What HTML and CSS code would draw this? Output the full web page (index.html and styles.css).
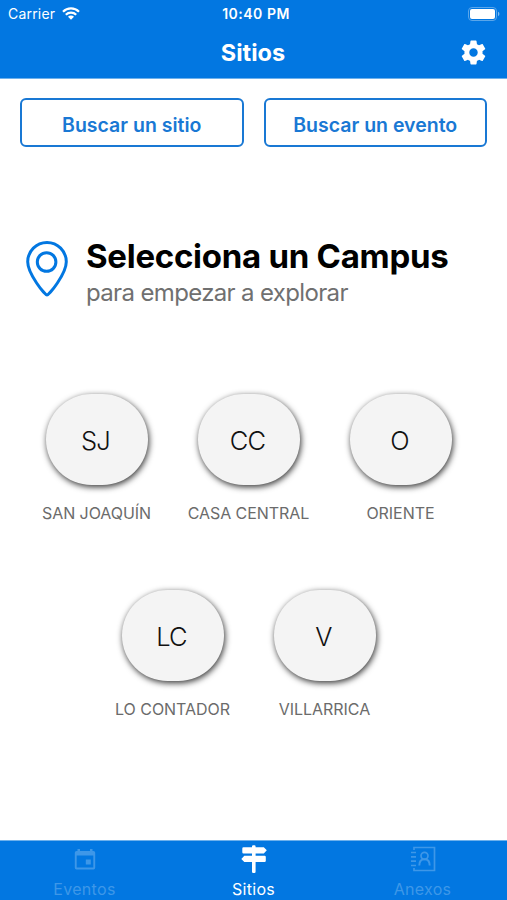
FILE: index.html
```
<!DOCTYPE html>
<html lang="es">
<head>
    <meta charset="UTF-8">
    <meta name="viewport" content="width=device-width, initial-scale=1.0">
    <title>Sitios</title>
    <link rel="stylesheet" href="styles.css">
</head>
<body>

<header class="header">
    <div class="status">
        <div class="carrier">
            <span>Carrier</span>
            <svg class="wifi" viewBox="0 0 18 13">
                <path d="M1 4.7a11.4 11.4 0 0 1 16 0M3.8 7.7a7.4 7.4 0 0 1 10.4 0" fill="none" stroke="#fff" stroke-width="2.2"/>
                <path d="M6 9.8a4.2 4.2 0 0 1 6 0L9 12.8z" fill="#fff"/>
            </svg>
        </div>
        <div class="time">10:40 PM</div>
        <svg class="battery" viewBox="0 0 32 14">
            <rect x=".5" y=".5" width="28" height="13" rx="3.5" fill="none" stroke="#5aa6ea"/>
            <rect x="2" y="2" width="25" height="10" rx="2" fill="#fff"/>
            <path d="M30 4.8a2.4 2.4 0 0 1 0 4.4z" fill="#80bbf0"/>
        </svg>
    </div>
    <div class="navbar">
        <h1 class="title">Sitios</h1>
        <svg class="gear" viewBox="0 0 24 24">
            <path fill="#fff" d="M19.43 12.98c.04-.32.07-.64.07-.98s-.03-.66-.07-.98l2.11-1.65c.19-.15.24-.42.12-.64l-2-3.46c-.12-.22-.39-.3-.61-.22l-2.49 1c-.52-.4-1.08-.73-1.69-.98l-.38-2.65C14.46 2.18 14.25 2 14 2h-4c-.25 0-.46.18-.49.42l-.38 2.65c-.61.25-1.17.59-1.69.98l-2.49-1c-.23-.09-.49 0-.61.22l-2 3.46c-.13.22-.07.49.12.64l2.11 1.65c-.04.32-.07.65-.07.98s.03.66.07.98l-2.11 1.65c-.19.15-.24.42-.12.64l2 3.46c.12.22.39.3.61.22l2.49-1c.52.4 1.08.73 1.69.98l.38 2.65c.03.24.24.42.49.42h4c.25 0 .46-.18.49-.42l.38-2.65c.61-.25 1.17-.59 1.69-.98l2.49 1c.23.09.49 0 .61-.22l2-3.46c.12-.22.07-.49-.12-.64l-2.11-1.65zM12 15.5c-1.93 0-3.5-1.57-3.5-3.5s1.57-3.5 3.5-3.5 3.5 1.57 3.5 3.5-1.57 3.5-3.5 3.5z"/>
        </svg>
    </div>
</header>

<main class="content">
    <div class="actions">
        <button class="action">Buscar un sitio</button>
        <button class="action">Buscar un evento</button>
    </div>

    <div class="intro">
        <svg class="pin" viewBox="0 0 42 56">
            <path d="M21 54C19 54 1.7 33 1.7 20.8a19.3 19.3 0 0 1 38.6 0C40.3 33 23 54 21 54z"/>
            <circle cx="20.6" cy="21" r="9.3"/>
        </svg>
        <div>
            <h2 class="intro-title">Selecciona un Campus</h2>
            <p class="intro-text">para empezar a explorar</p>
        </div>
    </div>

    <div class="campuses">
        <div class="campus">
            <button class="circle">SJ</button>
            <div class="name">SAN JOAQUÍN</div>
        </div>
        <div class="campus">
            <button class="circle">CC</button>
            <div class="name">CASA CENTRAL</div>
        </div>
        <div class="campus">
            <button class="circle">O</button>
            <div class="name">ORIENTE</div>
        </div>
        <div class="campus">
            <button class="circle">LC</button>
            <div class="name">LO CONTADOR</div>
        </div>
        <div class="campus">
            <button class="circle">V</button>
            <div class="name">VILLARRICA</div>
        </div>
    </div>
</main>

<nav class="tabs">
    <a class="tab">
        <svg class="tab-icon" viewBox="0 0 28 28">
            <path fill="currentColor" fill-rule="evenodd" d="M6.5 4H9v2h10V4h2.500v2H22.500a1.700 1.700 0 0 1 1.700 1.700v15A1.700 1.700 0 0 1 22.500 24.400H5.500a1.700 1.700 0 0 1-1.700-1.700v-15A1.700 1.700 0 0 1 5.500 6h1zM5.700 10.500v12h16.600v-12zM14.800 14.500h5v5h-5z"/>
        </svg>
        <span>Eventos</span>
    </a>
    <a class="tab active">
        <svg class="tab-icon" viewBox="0 0 28 28">
            <path fill="currentColor" d="M12 1.500q0-1.200 1.200-1.200h1.200q1.200 0 1.200 1.200v.7h8.200l3 3-3 3.200H3.500q-1.200 0-1.200-1.200V3.400q0-1.200 1.200-1.200H12zM12 8h3.600v3H12zM4.300 10.800h20.300q1.200 0 1.200 1.200v3.800q0 1.200-1.200 1.200H4.300l-3-3.100zM12 17h3.600v9.800q0 1.200-1.200 1.200h-1.200q-1.200 0-1.200-1.200z"/>
        </svg>
        <span>Sitios</span>
    </a>
    <a class="tab">
        <svg class="tab-icon" viewBox="0 0 28 28">
            <g fill="none" stroke="currentColor" stroke-width="1.7">
                <path d="M5 5V2.500h20.500v23H5V23M2 7.500h5M2 11.800h5M2 16.200h5M2 20.500h5"/>
                <circle cx="15.500" cy="10.800" r="3.500"/>
                <path d="M10.300 20.500c0-3.800 2-6.200 5.200-6.200s5.200 2.400 5.200 6.200" stroke-width="2"/>
            </g>
        </svg>
        <span>Anexos</span>
    </a>
</nav>

</body>
</html>
```
FILE: styles.css
```
* {
    box-sizing: border-box;
}
body {
    margin: 0;
    height: 900px;
    display: flex;
    flex-direction: column;
    background: #fff;
    color: #000;
    font-family: Inter, Roboto, sans-serif;
    overflow: hidden;
}
.header {
    height: 79px;
    background: #0277e1;
    border-bottom: 1px solid #6eb1ec;
    color: #fff;
}
.status {
    height: 27px;
    padding: 0 7px 0 8px;
    display: grid;
    grid-template-columns: 1fr auto 1fr;
    align-items: center;
    font-size: 14px;
    letter-spacing: 0.2px;
}
.carrier {
    display: flex;
    align-items: center;
    gap: 7px;
}
.wifi {
    width: 18px;
    height: 13px;
}
.time {
    padding-left: 4px;
    font-weight: 600;
    font-size: 14px;
    letter-spacing: 0.5px;
}
.battery {
    width: 32px;
    height: 14px;
    justify-self: end;
}
.navbar {
    height: 51px;
    padding: 0 19px 0 47px;
    display: flex;
    align-items: center;
}
.title {
    flex: 1;
    margin: 0;
    text-align: center;
    font-size: 23.5px;
    font-weight: 700;
}
.gear {
    width: 29px;
    height: 29px;
}
.content {
    flex: 1;
    padding: 19px 20px 0;
}
.actions {
    display: flex;
    gap: 20px;
}
.action {
    flex: 1;
    height: 49px;
    padding: 4px 0 0;
    border: 2px solid #1978d4;
    border-radius: 6px;
    background: #fff;
    color: #1978d4;
    font-family: inherit;
    font-size: 19.5px;
    font-weight: 600;
}
.intro {
    margin-top: 88px;
    padding-left: 6px;
    display: flex;
    gap: 18px;
}
.pin {
    width: 42px;
    height: 56px;
    margin-top: 6px;
    fill: none;
    stroke: #0277e1;
    stroke-width: 3;
}
.intro-title {
    margin: 0;
    font-size: 33px;
    line-height: 42px;
    font-weight: 700;
    letter-spacing: -0.27px;
    white-space: nowrap;
}
.intro-text {
    margin: 0;
    font-size: 24px;
    line-height: 32px;
    letter-spacing: -0.65px;
    color: #707070;
    white-space: nowrap;
}
.campuses {
    margin-top: 85px;
    padding-right: 10px;
    display: flex;
    flex-wrap: wrap;
    justify-content: center;
    row-gap: 62px;
}
.campus {
    width: 152px;
    height: 134px;
    text-align: center;
}
.circle {
    width: 102px;
    height: 91px;
    padding: 2px 2px 0 0;
    border: none;
    border-radius: 46px;
    background: #f4f4f4;
    box-shadow: 1px 2px 6px 0 rgba(0, 0, 0, 0.8);
    color: #111;
    font-family: inherit;
    font-size: 25.5px;
    font-weight: 300;
    letter-spacing: -0.8px;
}
.name {
    margin-top: 18px;
    font-size: 16px;
    line-height: 20px;
    letter-spacing: -0.05px;
    color: #6b6b6b;
    white-space: nowrap;
}
.tabs {
    height: 60px;
    display: flex;
    background: #0277e1;
    border-top: 1px solid #6eb1ec;
}
.tab {
    flex: 1;
    padding-top: 4px;
    display: flex;
    flex-direction: column;
    align-items: center;
    color: #3e97e8;
    font-size: 16px;
    line-height: 20px;
    letter-spacing: 0.3px;
}
.tab-icon {
    width: 28px;
    height: 28px;
    margin-bottom: 6px;
}
.tab.active {
    color: #fff;
}
```
